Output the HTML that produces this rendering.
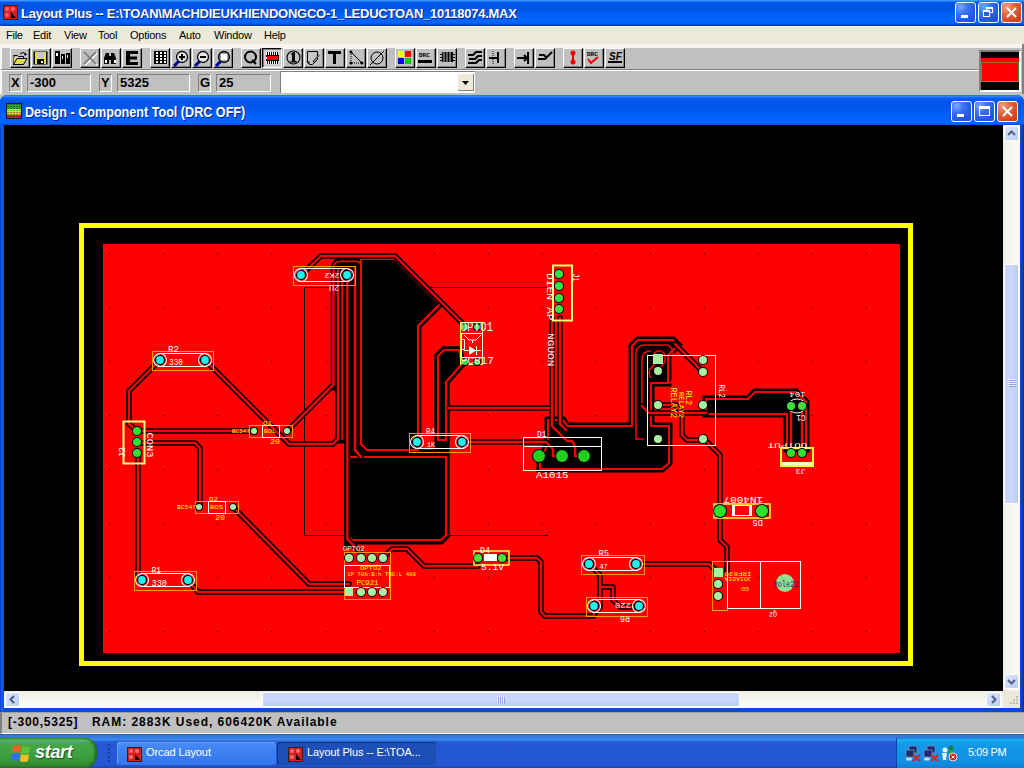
<!DOCTYPE html>
<html><head><meta charset="utf-8">
<style>
*{box-sizing:border-box}
body{margin:0;width:1024px;height:768px;overflow:hidden;position:relative;background:#c0c0c0;font-family:"Liberation Sans",sans-serif}
.a{position:absolute}
#title{left:0;top:0;width:1024px;height:26px;background:linear-gradient(to bottom,#3d95ff 0px,#3d95ff 1px,#0058ee 2px,#0053e0 6px,#0055e8 10px,#0062fa 16px,#0066ff 23px,#0050e0 24px,#0040b8 25px,#0040b8 26px)}
#title .t{left:21px;top:6px;color:#fff;font-weight:bold;font-size:13px;letter-spacing:-0.25px;white-space:nowrap;text-shadow:1px 1px 0 #0a1e84}
.xpbtn{width:21px;height:21px;border:1px solid #fff;border-radius:3px;background:radial-gradient(circle at 25% 20%,#7aa6ff 0%,#3a6ff5 35%,#2358e6 70%,#1c4fd8 100%)}
.xpclose{background:radial-gradient(circle at 25% 20%,#f4a080 0%,#e2623a 40%,#d4461e 75%,#c43a14 100%)}
#menu{left:0;top:26px;width:1024px;height:18px;background:#ece9d8;border-top:1px solid #f4f6fb}
#menu span{position:absolute;top:2px;font-size:11px;color:#000;letter-spacing:-0.25px}
#tbband{left:0;top:44px;width:1024px;height:50px;background:#c0c0c0;border-top:4px solid #f6f6f3}
.btn{position:absolute;top:48px;width:20px;height:20px;background:#c0c0c0;border-top:1px solid #fff;border-left:1px solid #fff;border-right:1px solid #000;border-bottom:1px solid #000;box-shadow:inset -1px -1px 0 #808080}
.btn.pr{border-top:1px solid #000;border-left:1px solid #000;border-right:1px solid #fff;border-bottom:1px solid #fff;box-shadow:inset 1px 1px 0 #808080;background:#cfcfcf}
.sunk{position:absolute;top:74px;height:18px;background:#c0c0c0;border-top:1px solid #808080;border-left:1px solid #808080;border-right:1px solid #fff;border-bottom:1px solid #fff;font-weight:bold;font-size:13px;padding-left:2px;line-height:16px;color:#000}
#mdi{left:0;top:95px;width:1024px;height:617px;background:#0048e0;border-radius:7px 7px 0 0;background:linear-gradient(to right,#0a3fd0 0px,#1a5cf0 2px,#0a48e0 4px,#0a48e0 1020px,#0840c8 1022px,#062c9a 1024px)}
#mtitle{left:0;top:95px;width:1024px;height:30px;border-radius:7px 7px 0 0;background:linear-gradient(to bottom,#0a60ff 0px,#3c8cff 1px,#0a5ef8 3px,#0053e6 8px,#0058ee 14px,#0064fc 22px,#0066ff 28px,#0050e0 30px)}
#mtitle .t{left:25px;top:9px;color:#fff;font-weight:bold;font-size:14px;letter-spacing:0px;transform:scaleX(0.9);transform-origin:0 0;white-space:nowrap;text-shadow:1px 1px 0 #0a1e84}
#canvas{left:4px;top:125px;width:999px;height:566px;background:#000}
#vscroll{left:1003px;top:125px;width:17px;height:566px;background:linear-gradient(to right,#eeede5,#fdfdf9)}
#hscroll{left:4px;top:691px;width:999px;height:17px;background:linear-gradient(to bottom,#eeede5,#fdfdf9)}
.sbb{position:absolute;width:15px;height:15px;border:1px solid #fff;border-radius:2px;background:linear-gradient(135deg,#dce6fd,#b9ccf8)}
#status{left:0;top:712px;width:1024px;height:22px;background:#c0c0c0;border-top:1px solid #a0a0a0;border-left:2px solid #808080;border-bottom:1px solid #fff}
#status span{position:absolute;top:2px;font-size:12px;font-weight:bold;color:#000;white-space:nowrap;letter-spacing:0.75px}
#task{left:0;top:734px;width:1024px;height:34px;background:linear-gradient(to bottom,#2a5cb8 0px,#2a5cb8 1px,#3478dc 1px,#3478dc 3px,#3a80e8 4px,#3d8cf0 6px,#2c64d8 7px,#2456d2 10px,#2458d6 30px,#1f4fc0 33px,#1941a5 34px)}
</style></head><body>
<div id="title" class="a">
  <svg class="a" style="left:3px;top:5px" width="15" height="15" viewBox="0 0 15 15"><rect x="0.5" y="0.5" width="14" height="14" fill="#d82020" stroke="#302020"/><circle cx="4" cy="4" r="2" fill="#ff6060"/><circle cx="10" cy="4" r="2" fill="#ff6060"/><circle cx="4" cy="10" r="2" fill="#ff6060"/><path d="M8 7 L13 13 L8 13 Z" fill="#000"/></svg>
  <div class="t a">Layout Plus -- E:\TOAN\MACHDIEUKHIENDONGCO-1_LEDUCTOAN_10118074.MAX</div>
  <div class="a xpbtn" style="left:955px;top:2px"><div class="a" style="left:5px;top:12px;width:7px;height:3px;background:#fff"></div></div>
  <div class="a xpbtn" style="left:978px;top:2px"><div class="a" style="left:7px;top:4px;width:7px;height:6px;border:1px solid #fff;border-top-width:2px"></div><div class="a" style="left:4px;top:7px;width:7px;height:7px;border:1px solid #fff;border-top-width:2px;background:#2a60ec"></div></div>
  <div class="a xpbtn xpclose" style="left:1001px;top:2px"><svg class="a" style="left:0;top:0" width="19" height="19"><path d="M5 5 L14 14 M14 5 L5 14" stroke="#fff" stroke-width="2"/></svg></div>
</div>
<div id="menu" class="a">
  <span style="left:6px">File</span><span style="left:33px">Edit</span><span style="left:64px">View</span><span style="left:98px">Tool</span><span style="left:130px">Options</span><span style="left:179px">Auto</span><span style="left:214px">Window</span><span style="left:264px">Help</span>
</div>
<div id="tbband" class="a"></div>
<div class="a" style="left:0;top:44px;width:2px;height:50px;background:#f6f6f3"></div>
<div class="a" style="left:1px;top:69px;width:978px;height:1px;background:#808080"></div>
<div class="a" style="left:1px;top:70px;width:978px;height:1px;background:#fff"></div>
<div class="btn" style="left:10px"></div>
<div class="btn" style="left:31px"></div>
<div class="btn" style="left:52px"></div>
<div class="btn" style="left:80px"></div>
<div class="btn" style="left:101px"></div>
<div class="btn" style="left:122px"></div>
<div class="btn" style="left:150px"></div>
<div class="btn" style="left:171px"></div>
<div class="btn" style="left:192px"></div>
<div class="btn" style="left:213px"></div>
<div class="btn" style="left:241px"></div>
<div class="btn pr" style="left:262px"></div>
<div class="btn" style="left:283px"></div>
<div class="btn" style="left:304px"></div>
<div class="btn" style="left:325px"></div>
<div class="btn" style="left:346px"></div>
<div class="btn" style="left:367px"></div>
<div class="btn" style="left:395px"></div>
<div class="btn" style="left:416px"></div>
<div class="btn" style="left:437px"></div>
<div class="btn" style="left:465px"></div>
<div class="btn" style="left:486px"></div>
<div class="btn" style="left:514px"></div>
<div class="btn" style="left:535px"></div>
<div class="btn" style="left:563px"></div>
<div class="btn" style="left:584px"></div>
<div class="btn" style="left:605px"></div>
<svg class="a" style="left:0;top:44px" width="640" height="26" viewBox="0 44 640 26">
<path d="M13.5,55.5 h4 l1,1 h5 v2" fill="none" stroke="#000"/>
<path d="M13.5,64.5 v-8.5 h1 v8.5 z" fill="#000"/>
<path d="M14,57 h9 v2 h-6 l-3,5 z" fill="#e0e040"/>
<path d="M13.5,64.5 l3.5,-6 h10 l-3.5,6 z" fill="#e0e040" stroke="#000"/>
<path d="M20,54 q3,-3 6,0" fill="none" stroke="#000"/><path d="M25,52.5 l2,2.5 l-3,0.5z" fill="#000"/>
<rect x="33.5" y="51.5" width="14" height="13" fill="#000"/>
<rect x="35" y="52" width="11" height="12" fill="#e0e040"/>
<rect x="37" y="52" width="7" height="6" fill="#c8c8c8"/>
<rect x="37" y="59" width="7" height="5" fill="#000"/><rect x="41" y="61" width="2" height="2" fill="#fff"/>
<rect x="55" y="51" width="5" height="13" fill="#000"/><rect x="56" y="53" width="2" height="3" fill="#fff"/>
<rect x="61" y="54" width="4" height="10" fill="#000"/><rect x="62" y="56" width="1" height="3" fill="#fff"/>
<rect x="66" y="53" width="4" height="11" fill="#000"/><rect x="67" y="55" width="1" height="3" fill="#fff"/>
<path d="M84,52 L96,64 M96,52 L84,64" stroke="#fff" stroke-width="2" transform="translate(1,1)"/><path d="M84,52 L96,64 M96,52 L84,64" stroke="#808080" stroke-width="2"/>
<path d="M104,64 v-6 l2,-5 h3 v3 h2 v-3 h3 l2,5 v6 h-5 v-4 h-2 v4 z" fill="#000"/><rect x="105" y="60" width="2" height="3" fill="#fff"/><rect x="114" y="60" width="2" height="3" fill="#fff"/>
<path d="M126,51 h12 v3 h-8 v2.5 h7 v3 h-7 v2.5 h8 v3 h-12 z" fill="#000"/>
<rect x="154" y="51" width="13" height="13" fill="#000"/>
<rect x="156" y="52" width="2" height="2" fill="#fff"/>
<rect x="156" y="55" width="2" height="2" fill="#fff"/>
<rect x="156" y="58" width="2" height="2" fill="#fff"/>
<rect x="156" y="61" width="2" height="2" fill="#fff"/>
<rect x="160" y="52" width="2" height="2" fill="#fff"/>
<rect x="160" y="55" width="2" height="2" fill="#fff"/>
<rect x="160" y="58" width="2" height="2" fill="#fff"/>
<rect x="160" y="61" width="2" height="2" fill="#fff"/>
<rect x="164" y="52" width="2" height="2" fill="#fff"/>
<rect x="164" y="55" width="2" height="2" fill="#fff"/>
<rect x="164" y="58" width="2" height="2" fill="#fff"/>
<rect x="164" y="61" width="2" height="2" fill="#fff"/>
<path d="M179,61 l-5,5" stroke="#0000a0" stroke-width="3"/>
<circle cx="182" cy="57" r="5.5" fill="#e4e4e4" stroke="#000" stroke-width="1.3"/>
<path d="M179,57 h6 M182,54 v6" stroke="#000" stroke-width="2"/>
<path d="M200,61 l-5,5" stroke="#0000a0" stroke-width="3"/>
<circle cx="203" cy="57" r="5.5" fill="#e4e4e4" stroke="#000" stroke-width="1.3"/>
<path d="M200,57 h6" stroke="#000" stroke-width="2"/>
<path d="M221,61 l-5,5" stroke="#0000a0" stroke-width="3"/>
<circle cx="224" cy="57" r="5.5" fill="#e4e4e4" stroke="#000" stroke-width="1.3"/>
<rect x="220" y="53" width="8" height="8" fill="#fff" stroke="#000" stroke-width="0.8"/>
<circle cx="250.5" cy="57" r="5.5" fill="none" stroke="#000" stroke-width="2"/><path d="M252,60 l4,4" stroke="#000" stroke-width="2"/>
<rect x="267" y="52" width="1" height="3" fill="#000"/><rect x="267" y="61" width="1" height="3" fill="#000"/>
<rect x="266" y="52" width="1" height="3" fill="#fff"/><rect x="266" y="61" width="1" height="3" fill="#fff"/>
<rect x="269" y="52" width="1" height="3" fill="#000"/><rect x="269" y="61" width="1" height="3" fill="#000"/>
<rect x="268" y="52" width="1" height="3" fill="#fff"/><rect x="268" y="61" width="1" height="3" fill="#fff"/>
<rect x="271" y="52" width="1" height="3" fill="#000"/><rect x="271" y="61" width="1" height="3" fill="#000"/>
<rect x="270" y="52" width="1" height="3" fill="#fff"/><rect x="270" y="61" width="1" height="3" fill="#fff"/>
<rect x="273" y="52" width="1" height="3" fill="#000"/><rect x="273" y="61" width="1" height="3" fill="#000"/>
<rect x="272" y="52" width="1" height="3" fill="#fff"/><rect x="272" y="61" width="1" height="3" fill="#fff"/>
<rect x="275" y="52" width="1" height="3" fill="#000"/><rect x="275" y="61" width="1" height="3" fill="#000"/>
<rect x="274" y="52" width="1" height="3" fill="#fff"/><rect x="274" y="61" width="1" height="3" fill="#fff"/>
<rect x="277" y="52" width="1" height="3" fill="#000"/><rect x="277" y="61" width="1" height="3" fill="#000"/>
<rect x="276" y="52" width="1" height="3" fill="#fff"/><rect x="276" y="61" width="1" height="3" fill="#fff"/>
<rect x="266" y="55" width="13" height="6" fill="#000"/><rect x="267" y="56" width="11" height="4" fill="#f00"/><rect x="266" y="57" width="1" height="2" fill="#fff"/>
<circle cx="293.5" cy="57.5" r="6.5" fill="none" stroke="#000" stroke-width="1.2"/><path d="M291,53.5 l2.5,-1.5 h1.5 v9 h1.5 v1.5 h-6 v-1.5 h1.5 v-6.5 h-1 z" fill="#000"/>
<path d="M307.5,51.5 h10 v8 l-5,5 h-3 l-2,-2 z" fill="#c8c8c8" stroke="#000"/><path d="M307.5,62.5 q2,-2 2,1" fill="none" stroke="#000"/><path d="M313,62 l6,-7" stroke="#000" stroke-width="1.5"/><path d="M314,61 l5,-6" stroke="#fff" stroke-width="0.6"/>
<path d="M328,51 h13 v3 h-5 v10 h-3 v-10 h-5 z" fill="#000"/>
<path d="M351,52 v11 h11" fill="none" stroke="#000" stroke-dasharray="1 1"/><path d="M351,52 l11,11" stroke="#000"/><circle cx="351" cy="52" r="1.5"/><circle cx="351" cy="63" r="1.5"/><circle cx="362" cy="63" r="1.5"/>
<circle cx="377" cy="58" r="6" fill="none" stroke="#000"/><path d="M370,65 L384,51" stroke="#000"/>
<rect x="398" y="51" width="6" height="6" fill="#ff0"/><rect x="405" y="51" width="6" height="6" fill="#f00"/><rect x="398" y="58" width="6" height="6" fill="#00f"/><rect x="405" y="58" width="6" height="6" fill="#0c0"/>
<text x="419" y="57" font-size="6" font-weight="bold" font-family="Liberation Mono">DRC</text><rect x="418" y="60" width="14" height="3" fill="#000"/>
<rect x="442" y="52" width="11" height="10" fill="#000"/><path d="M440,54.5 h15 M440,57.5 h15 M440,60.5 h15" stroke="#000"/><path d="M444,52v10 M447,52v10 M450,52v10" stroke="#c0c0c0"/>
<path d="M468,55 h5 l3,-3 h6 M469,59 h6 l3,-3 h4 M468,63 h8 l3,-3 h3" fill="none" stroke="#000" stroke-width="2"/>
<path d="M493,51 v14" stroke="#000" stroke-dasharray="1 1"/><path d="M489,58 h9 M498,52 v11" stroke="#000" stroke-width="2"/>
<path d="M517,58 h10 M524,55 l3,3 l-3,3 M528,52 v12" fill="none" stroke="#000" stroke-width="2"/>
<path d="M538,59 h7 l7,-7 M539,55 h5 l2,2" fill="none" stroke="#000" stroke-width="2"/>
<circle cx="573" cy="53" r="2.5" fill="#e00"/><circle cx="573" cy="62" r="2.5" fill="#e00"/><rect x="572" y="53" width="2" height="9" fill="#e00"/>
<text x="587" y="56" font-size="6" font-weight="bold" font-family="Liberation Mono">DRC</text><path d="M588,59 l3,4 l7,-6" fill="none" stroke="#e00" stroke-width="2"/>
<text x="609" y="60" font-size="10" font-weight="bold" font-style="italic" font-family="Liberation Sans">SF</text><rect x="608" y="61" width="14" height="2" fill="#000"/>
</svg>
<div class="sunk" style="left:9px;width:13px;padding-left:1px">X</div>
<div class="sunk" style="left:27px;width:64px">-300</div>
<div class="sunk" style="left:99px;width:13px;padding-left:1px">Y</div>
<div class="sunk" style="left:117px;width:73px">5325</div>
<div class="sunk" style="left:198px;width:13px;padding-left:1px">G</div>
<div class="sunk" style="left:216px;width:55px">25</div>
<div class="a" style="left:280px;top:71px;width:195px;height:22px;background:#fff;border-top:1px solid #808080;border-left:1px solid #808080"></div>
<div class="a" style="left:458px;top:74px;width:16px;height:17px;background:#ece9d8;border-right:1px solid #808080;border-bottom:1px solid #808080"><svg class="a" style="left:0;top:0" width="16" height="17"><path d="M4 7 h7 l-3.5 4 z" fill="#000"/></svg></div>
<div class="a" style="left:979px;top:50px;width:42px;height:42px;border-top:2px solid #808080;border-left:2px solid #808080;border-right:2px solid #fff;border-bottom:2px solid #fff;background:#000">
  <div class="a" style="left:0;top:6px;width:38px;height:4px;background:#f00"></div>
  <div class="a" style="left:0;top:10px;width:38px;height:20px;background:#f00;border:1px solid #3a9a20;border-top-color:#b07000;border-bottom-color:#a08000"></div>
</div>
<div class="a" style="left:1022px;top:44px;width:2px;height:50px;background:#808080"></div>
<div id="mdi" class="a"></div>
<div id="mtitle" class="a">
  <svg class="a" style="left:6px;top:8px" width="16" height="16" viewBox="0 0 16 16"><rect x="0" y="0" width="16" height="16" fill="#102010"/><rect x="1" y="1" width="14" height="14" fill="#30a030"/><rect x="1" y="6" width="14" height="3" fill="#a0ff40"/><rect x="1" y="9" width="14" height="3" fill="#e0c040"/><rect x="1" y="12" width="14" height="3" fill="#c02060"/><path d="M2 1v14M5 1v14M8 1v14M11 1v14M14 1v14" stroke="#000" stroke-width="1" stroke-dasharray="1 1" opacity="0.6"/></svg>
  <div class="t a">Design - Component Tool (DRC OFF)</div>
  <div class="a xpbtn" style="left:951px;top:6px"><div class="a" style="left:5px;top:12px;width:7px;height:3px;background:#fff"></div></div>
  <div class="a xpbtn" style="left:974px;top:6px"><div class="a" style="left:4px;top:4px;width:11px;height:10px;border:1px solid #fff;border-top-width:3px"></div></div>
  <div class="a xpbtn xpclose" style="left:997px;top:6px"><svg class="a" style="left:0;top:0" width="19" height="19"><path d="M5 5 L14 14 M14 5 L5 14" stroke="#fff" stroke-width="2"/></svg></div>
</div>
<div id="canvas" class="a"><svg class="a" style="left:0;top:0" width="999" height="566" viewBox="4 125 999 566" shape-rendering="crispEdges">
<rect x="4" y="125" width="999" height="566" fill="#000"/>
<rect x="81.5" y="225.5" width="829" height="438" fill="none" stroke="#ffff00" stroke-width="5"/>
<rect x="103" y="244" width="797" height="409" fill="#ff0000"/>
<rect x="109" y="253" width="1" height="1" fill="#000"/>
<rect x="109" y="307" width="1" height="1" fill="#000"/>
<rect x="109" y="361" width="1" height="1" fill="#000"/>
<rect x="109" y="415" width="1" height="1" fill="#000"/>
<rect x="109" y="469" width="1" height="1" fill="#000"/>
<rect x="109" y="523" width="1" height="1" fill="#000"/>
<rect x="109" y="577" width="1" height="1" fill="#000"/>
<rect x="109" y="631" width="1" height="1" fill="#000"/>
<rect x="163" y="253" width="1" height="1" fill="#000"/>
<rect x="163" y="307" width="1" height="1" fill="#000"/>
<rect x="163" y="361" width="1" height="1" fill="#000"/>
<rect x="163" y="415" width="1" height="1" fill="#000"/>
<rect x="163" y="469" width="1" height="1" fill="#000"/>
<rect x="163" y="523" width="1" height="1" fill="#000"/>
<rect x="163" y="577" width="1" height="1" fill="#000"/>
<rect x="163" y="631" width="1" height="1" fill="#000"/>
<rect x="217" y="253" width="1" height="1" fill="#000"/>
<rect x="217" y="307" width="1" height="1" fill="#000"/>
<rect x="217" y="361" width="1" height="1" fill="#000"/>
<rect x="217" y="415" width="1" height="1" fill="#000"/>
<rect x="217" y="469" width="1" height="1" fill="#000"/>
<rect x="217" y="523" width="1" height="1" fill="#000"/>
<rect x="217" y="577" width="1" height="1" fill="#000"/>
<rect x="217" y="631" width="1" height="1" fill="#000"/>
<rect x="271" y="253" width="1" height="1" fill="#000"/>
<rect x="271" y="307" width="1" height="1" fill="#000"/>
<rect x="271" y="361" width="1" height="1" fill="#000"/>
<rect x="271" y="415" width="1" height="1" fill="#000"/>
<rect x="271" y="469" width="1" height="1" fill="#000"/>
<rect x="271" y="523" width="1" height="1" fill="#000"/>
<rect x="271" y="577" width="1" height="1" fill="#000"/>
<rect x="271" y="631" width="1" height="1" fill="#000"/>
<rect x="326" y="253" width="1" height="1" fill="#000"/>
<rect x="326" y="307" width="1" height="1" fill="#000"/>
<rect x="326" y="361" width="1" height="1" fill="#000"/>
<rect x="326" y="415" width="1" height="1" fill="#000"/>
<rect x="326" y="469" width="1" height="1" fill="#000"/>
<rect x="326" y="523" width="1" height="1" fill="#000"/>
<rect x="326" y="577" width="1" height="1" fill="#000"/>
<rect x="326" y="631" width="1" height="1" fill="#000"/>
<rect x="380" y="253" width="1" height="1" fill="#000"/>
<rect x="380" y="307" width="1" height="1" fill="#000"/>
<rect x="380" y="361" width="1" height="1" fill="#000"/>
<rect x="380" y="415" width="1" height="1" fill="#000"/>
<rect x="380" y="469" width="1" height="1" fill="#000"/>
<rect x="380" y="523" width="1" height="1" fill="#000"/>
<rect x="380" y="577" width="1" height="1" fill="#000"/>
<rect x="380" y="631" width="1" height="1" fill="#000"/>
<rect x="434" y="253" width="1" height="1" fill="#000"/>
<rect x="434" y="307" width="1" height="1" fill="#000"/>
<rect x="434" y="361" width="1" height="1" fill="#000"/>
<rect x="434" y="415" width="1" height="1" fill="#000"/>
<rect x="434" y="469" width="1" height="1" fill="#000"/>
<rect x="434" y="523" width="1" height="1" fill="#000"/>
<rect x="434" y="577" width="1" height="1" fill="#000"/>
<rect x="434" y="631" width="1" height="1" fill="#000"/>
<rect x="488" y="253" width="1" height="1" fill="#000"/>
<rect x="488" y="307" width="1" height="1" fill="#000"/>
<rect x="488" y="361" width="1" height="1" fill="#000"/>
<rect x="488" y="415" width="1" height="1" fill="#000"/>
<rect x="488" y="469" width="1" height="1" fill="#000"/>
<rect x="488" y="523" width="1" height="1" fill="#000"/>
<rect x="488" y="577" width="1" height="1" fill="#000"/>
<rect x="488" y="631" width="1" height="1" fill="#000"/>
<rect x="542" y="253" width="1" height="1" fill="#000"/>
<rect x="542" y="307" width="1" height="1" fill="#000"/>
<rect x="542" y="361" width="1" height="1" fill="#000"/>
<rect x="542" y="415" width="1" height="1" fill="#000"/>
<rect x="542" y="469" width="1" height="1" fill="#000"/>
<rect x="542" y="523" width="1" height="1" fill="#000"/>
<rect x="542" y="577" width="1" height="1" fill="#000"/>
<rect x="542" y="631" width="1" height="1" fill="#000"/>
<rect x="596" y="253" width="1" height="1" fill="#000"/>
<rect x="596" y="307" width="1" height="1" fill="#000"/>
<rect x="596" y="361" width="1" height="1" fill="#000"/>
<rect x="596" y="415" width="1" height="1" fill="#000"/>
<rect x="596" y="469" width="1" height="1" fill="#000"/>
<rect x="596" y="523" width="1" height="1" fill="#000"/>
<rect x="596" y="577" width="1" height="1" fill="#000"/>
<rect x="596" y="631" width="1" height="1" fill="#000"/>
<rect x="650" y="253" width="1" height="1" fill="#000"/>
<rect x="650" y="307" width="1" height="1" fill="#000"/>
<rect x="650" y="361" width="1" height="1" fill="#000"/>
<rect x="650" y="415" width="1" height="1" fill="#000"/>
<rect x="650" y="469" width="1" height="1" fill="#000"/>
<rect x="650" y="523" width="1" height="1" fill="#000"/>
<rect x="650" y="577" width="1" height="1" fill="#000"/>
<rect x="650" y="631" width="1" height="1" fill="#000"/>
<rect x="704" y="253" width="1" height="1" fill="#000"/>
<rect x="704" y="307" width="1" height="1" fill="#000"/>
<rect x="704" y="361" width="1" height="1" fill="#000"/>
<rect x="704" y="415" width="1" height="1" fill="#000"/>
<rect x="704" y="469" width="1" height="1" fill="#000"/>
<rect x="704" y="523" width="1" height="1" fill="#000"/>
<rect x="704" y="577" width="1" height="1" fill="#000"/>
<rect x="704" y="631" width="1" height="1" fill="#000"/>
<rect x="758" y="253" width="1" height="1" fill="#000"/>
<rect x="758" y="307" width="1" height="1" fill="#000"/>
<rect x="758" y="361" width="1" height="1" fill="#000"/>
<rect x="758" y="415" width="1" height="1" fill="#000"/>
<rect x="758" y="469" width="1" height="1" fill="#000"/>
<rect x="758" y="523" width="1" height="1" fill="#000"/>
<rect x="758" y="577" width="1" height="1" fill="#000"/>
<rect x="758" y="631" width="1" height="1" fill="#000"/>
<rect x="812" y="253" width="1" height="1" fill="#000"/>
<rect x="812" y="307" width="1" height="1" fill="#000"/>
<rect x="812" y="361" width="1" height="1" fill="#000"/>
<rect x="812" y="415" width="1" height="1" fill="#000"/>
<rect x="812" y="469" width="1" height="1" fill="#000"/>
<rect x="812" y="523" width="1" height="1" fill="#000"/>
<rect x="812" y="577" width="1" height="1" fill="#000"/>
<rect x="812" y="631" width="1" height="1" fill="#000"/>
<rect x="866" y="253" width="1" height="1" fill="#000"/>
<rect x="866" y="307" width="1" height="1" fill="#000"/>
<rect x="866" y="361" width="1" height="1" fill="#000"/>
<rect x="866" y="415" width="1" height="1" fill="#000"/>
<rect x="866" y="469" width="1" height="1" fill="#000"/>
<rect x="866" y="523" width="1" height="1" fill="#000"/>
<rect x="866" y="577" width="1" height="1" fill="#000"/>
<rect x="866" y="631" width="1" height="1" fill="#000"/>
</svg>
<svg class="a" style="left:0;top:0" width="999" height="566" viewBox="4 125 999 566">
<path d="M548,287.5 H304.5 V535.5 H548" fill="none" stroke="#000" stroke-width="1"/>
<path d="M334.5,265 L340,259 L356,259 L361,262 L361,446 L368,453 L438,453 L438,356 L444,350 L459,350 L462,364 L446,382 L446,536 L441,541 L353,541 L349,545 L347.5,545 L347.5,440 L339.5,440 L339.5,387 L334.5,387 Z" fill="#000" stroke="#000" stroke-width="7" stroke-linejoin="miter"/>
<path d="M361,259 L395,259 L440,304 L418,326 L418,450 L367,450 L361,444 Z" fill="#000" stroke="#000" stroke-width="7" stroke-linejoin="miter"/>
<path d="M361,259 L395,259 L440,304 L418,326 L418,450 L367,450 L361,444 Z" fill="none" stroke="#ff0000" stroke-width="2"/>
<path d="M342.3,268 V440" fill="none" stroke="#ff0000" stroke-width="1.8"/>
<path d="M333.3,292 V268 Q333.3,261.3 341,261.3 H356 Q361.3,261.3 361.3,267" fill="none" stroke="#ff0000" stroke-width="1.8"/>
<path d="M349,457 L446,457 L446,535 L441,540 L352,540 L349,537 Z" fill="#000" stroke="#000" stroke-width="7" stroke-linejoin="miter"/>
<path d="M349,457 L446,457 L446,535 L441,540 L352,540 L349,537 Z" fill="none" stroke="#ff0000" stroke-width="2"/>
<path d="M632,346 L638,340 L673,340 L678,345 L668,355 L668,383 L651,383 L651,426 L669,426 L669,463 L662,469 L540,469 L540,462 L546,448 L548,440 L548,420 L563,420 L567,426 L632,426 Z" fill="#000" stroke="#000" stroke-width="7" stroke-linejoin="miter"/>
<path d="M632,346 L638,340 L673,340 L678,345 L668,355 L668,383 L651,383 L651,426 L669,426 L669,463 L662,469 L540,469 L540,462 L546,448 L548,440 L548,420 L563,420 L567,426 L632,426 Z" fill="none" stroke="#ff0000" stroke-width="2"/>
<path d="M651,378 Q648,375 650,369 L654,365 V356 Q654,351 659,351 Q665,351 665,357 V362 L660,368" fill="none" stroke="#ff0000" stroke-width="1.5"/>
<path d="M644,439 H636 V354 Q636,345 645,345 H668 L673,350" fill="none" stroke="#ff0000" stroke-width="1.5"/>
<path d="M642,406 V360 Q642,351 651,351" fill="none" stroke="#ff0000" stroke-width="1.5"/>
<path d="M656,383 H668 Q673,383 673,377 V350" fill="none" stroke="#ff0000" stroke-width="1.5"/>
<path d="M706,399 L748,399 L755,392 L796,392 L806,402 L806,449 L787,449 L787,414 L706,414 Z" fill="#000" stroke="#000" stroke-width="7" stroke-linejoin="miter"/>
<path d="M706,399 L748,399 L755,392 L796,392 L806,402 L806,449 L787,449 L787,414 L706,414 Z" fill="none" stroke="#ff0000" stroke-width="2"/>
<path d="M438,356 L444,350 L459,350 L462,364 L446,382 L446,440 L438,440 Z" fill="#000" stroke="#000" stroke-width="7" stroke-linejoin="miter"/>
<path d="M438,356 L444,350 L459,350 L462,364 L446,382 L446,440 L438,440 Z" fill="none" stroke="#ff0000" stroke-width="2"/>
<path d="M160,360 L129,391 L129,424 L137,431" fill="none" stroke="#000" stroke-width="5.6" stroke-linejoin="round" stroke-linecap="round"/>
<path d="M137,431 L253,431" fill="none" stroke="#000" stroke-width="5.6" stroke-linejoin="round" stroke-linecap="round"/>
<path d="M137,443 L195,443 L200,448 L200,507" fill="none" stroke="#000" stroke-width="5.6" stroke-linejoin="round" stroke-linecap="round"/>
<path d="M138,453 L138,574 L142,580" fill="none" stroke="#000" stroke-width="5.6" stroke-linejoin="round" stroke-linecap="round"/>
<path d="M188,580 L198,592 L349,592" fill="none" stroke="#000" stroke-width="5.6" stroke-linejoin="round" stroke-linecap="round"/>
<path d="M233,507 L309,584 L349,584" fill="none" stroke="#000" stroke-width="5.6" stroke-linejoin="round" stroke-linecap="round"/>
<path d="M205,360 L283,438 L289,444 L333,444 L338,439 L338,270" fill="none" stroke="#000" stroke-width="5.6" stroke-linejoin="round" stroke-linecap="round"/>
<path d="M287,431 L333.5,384.5 L333.5,268" fill="none" stroke="#000" stroke-width="5.6" stroke-linejoin="round" stroke-linecap="round"/>
<path d="M301,275 L321,256 L395,256 L465,326" fill="none" stroke="#000" stroke-width="5.6" stroke-linejoin="round" stroke-linecap="round"/>
<path d="M347.3,280 L347.3,539 L361,553 L361,558" fill="none" stroke="#000" stroke-width="5.6" stroke-linejoin="round" stroke-linecap="round"/>
<path d="M355,268 L355,450 L361,457" fill="none" stroke="#000" stroke-width="5.6" stroke-linejoin="round" stroke-linecap="round"/>
<path d="M383,558 L392,549 L407,549 L424,566 L478,566" fill="none" stroke="#000" stroke-width="5.6" stroke-linejoin="round" stroke-linecap="round"/>
<path d="M502,558 L537,558 L541,562 L541,612 L545,616 L594,616 L594,606" fill="none" stroke="#000" stroke-width="5.6" stroke-linejoin="round" stroke-linecap="round"/>
<path d="M589,564 L600,575 L600,607 L596,612" fill="none" stroke="#000" stroke-width="5.6" stroke-linejoin="round" stroke-linecap="round"/>
<path d="M600,587 L613,587 L613,600 L620,607 L639,607" fill="none" stroke="#000" stroke-width="5.6" stroke-linejoin="round" stroke-linecap="round"/>
<path d="M636,564 L709,564 L718,572" fill="none" stroke="#000" stroke-width="5.6" stroke-linejoin="round" stroke-linecap="round"/>
<path d="M462,442 L546,442 L553,449 L553,456 L562,456" fill="none" stroke="#000" stroke-width="5.6" stroke-linejoin="round" stroke-linecap="round"/>
<path d="M449,408 L549,408" fill="none" stroke="#000" stroke-width="5.6" stroke-linejoin="round" stroke-linecap="round"/>
<path d="M552,318 L552,426 L567,441 L572,441 L575,446 L575,456 L584,456" fill="none" stroke="#000" stroke-width="5.6" stroke-linejoin="round" stroke-linecap="round"/>
<path d="M560,318 L560,424 L566,430" fill="none" stroke="#000" stroke-width="5.6" stroke-linejoin="round" stroke-linecap="round"/>
<path d="M704,439 L720,455 L720,540 L727,547 L727,572" fill="none" stroke="#000" stroke-width="5.6" stroke-linejoin="round" stroke-linecap="round"/>
<path d="M703,372 L675,344" fill="none" stroke="#000" stroke-width="5.6" stroke-linejoin="round" stroke-linecap="round"/>
<path d="M642,406 L649,413 L706,413" fill="none" stroke="#000" stroke-width="5.6" stroke-linejoin="round" stroke-linecap="round"/>
<path d="M658,405 L676,405 L682,413 L682,435 L687,440 L703,440" fill="none" stroke="#000" stroke-width="5.6" stroke-linejoin="round" stroke-linecap="round"/>
<path d="M791,405 L791,453" fill="none" stroke="#000" stroke-width="5.6" stroke-linejoin="round" stroke-linecap="round"/>
<path d="M802,405 L802,453" fill="none" stroke="#000" stroke-width="5.6" stroke-linejoin="round" stroke-linecap="round"/>
<path d="M160,360 L129,391 L129,424 L137,431" fill="none" stroke="#ff0000" stroke-width="2.4" stroke-linejoin="round" stroke-linecap="round"/>
<path d="M137,431 L253,431" fill="none" stroke="#ff0000" stroke-width="2.4" stroke-linejoin="round" stroke-linecap="round"/>
<path d="M137,443 L195,443 L200,448 L200,507" fill="none" stroke="#ff0000" stroke-width="2.4" stroke-linejoin="round" stroke-linecap="round"/>
<path d="M138,453 L138,574 L142,580" fill="none" stroke="#ff0000" stroke-width="2.4" stroke-linejoin="round" stroke-linecap="round"/>
<path d="M188,580 L198,592 L349,592" fill="none" stroke="#ff0000" stroke-width="2.4" stroke-linejoin="round" stroke-linecap="round"/>
<path d="M233,507 L309,584 L349,584" fill="none" stroke="#ff0000" stroke-width="2.4" stroke-linejoin="round" stroke-linecap="round"/>
<path d="M205,360 L283,438 L289,444 L333,444 L338,439 L338,270" fill="none" stroke="#ff0000" stroke-width="2.4" stroke-linejoin="round" stroke-linecap="round"/>
<path d="M287,431 L333.5,384.5 L333.5,268" fill="none" stroke="#ff0000" stroke-width="2.4" stroke-linejoin="round" stroke-linecap="round"/>
<path d="M301,275 L321,256 L395,256 L465,326" fill="none" stroke="#ff0000" stroke-width="2.4" stroke-linejoin="round" stroke-linecap="round"/>
<path d="M347.3,280 L347.3,539 L361,553 L361,558" fill="none" stroke="#ff0000" stroke-width="2.4" stroke-linejoin="round" stroke-linecap="round"/>
<path d="M355,268 L355,450 L361,457" fill="none" stroke="#ff0000" stroke-width="2.4" stroke-linejoin="round" stroke-linecap="round"/>
<path d="M383,558 L392,549 L407,549 L424,566 L478,566" fill="none" stroke="#ff0000" stroke-width="2.4" stroke-linejoin="round" stroke-linecap="round"/>
<path d="M502,558 L537,558 L541,562 L541,612 L545,616 L594,616 L594,606" fill="none" stroke="#ff0000" stroke-width="2.4" stroke-linejoin="round" stroke-linecap="round"/>
<path d="M589,564 L600,575 L600,607 L596,612" fill="none" stroke="#ff0000" stroke-width="2.4" stroke-linejoin="round" stroke-linecap="round"/>
<path d="M600,587 L613,587 L613,600 L620,607 L639,607" fill="none" stroke="#ff0000" stroke-width="2.4" stroke-linejoin="round" stroke-linecap="round"/>
<path d="M636,564 L709,564 L718,572" fill="none" stroke="#ff0000" stroke-width="2.4" stroke-linejoin="round" stroke-linecap="round"/>
<path d="M462,442 L546,442 L553,449 L553,456 L562,456" fill="none" stroke="#ff0000" stroke-width="2.4" stroke-linejoin="round" stroke-linecap="round"/>
<path d="M449,408 L549,408" fill="none" stroke="#ff0000" stroke-width="2.4" stroke-linejoin="round" stroke-linecap="round"/>
<path d="M552,318 L552,426 L567,441 L572,441 L575,446 L575,456 L584,456" fill="none" stroke="#ff0000" stroke-width="2.4" stroke-linejoin="round" stroke-linecap="round"/>
<path d="M560,318 L560,424 L566,430" fill="none" stroke="#ff0000" stroke-width="2.4" stroke-linejoin="round" stroke-linecap="round"/>
<path d="M704,439 L720,455 L720,540 L727,547 L727,572" fill="none" stroke="#ff0000" stroke-width="2.4" stroke-linejoin="round" stroke-linecap="round"/>
<path d="M703,372 L675,344" fill="none" stroke="#ff0000" stroke-width="2.4" stroke-linejoin="round" stroke-linecap="round"/>
<path d="M642,406 L649,413 L706,413" fill="none" stroke="#ff0000" stroke-width="2.4" stroke-linejoin="round" stroke-linecap="round"/>
<path d="M658,405 L676,405 L682,413 L682,435 L687,440 L703,440" fill="none" stroke="#ff0000" stroke-width="2.4" stroke-linejoin="round" stroke-linecap="round"/>
<path d="M791,405 L791,453" fill="none" stroke="#ff0000" stroke-width="2.4" stroke-linejoin="round" stroke-linecap="round"/>
<path d="M802,405 L802,453" fill="none" stroke="#ff0000" stroke-width="2.4" stroke-linejoin="round" stroke-linecap="round"/>
<rect x="152.5" y="351.5" width="61" height="19" fill="none" stroke="#ff9900" stroke-width="1"/>
<path d="M160,353.5 H205 A7,7 0 0 1 205,366.5 H160 A7,7 0 0 1 160,353.5" fill="none" stroke="#fff" stroke-width="1"/>
<circle cx="160" cy="360" r="5.1" fill="#000"/>
<circle cx="160" cy="360" r="6.5" fill="none" stroke="#fff" stroke-width="1.1"/>
<circle cx="160" cy="360" r="3.9" fill="#20f0f0"/>
<circle cx="205" cy="360" r="5.1" fill="#000"/>
<circle cx="205" cy="360" r="6.5" fill="none" stroke="#fff" stroke-width="1.1"/>
<circle cx="205" cy="360" r="3.9" fill="#20f0f0"/>
<rect x="293.5" y="266.5" width="62" height="19" fill="none" stroke="#ff9900" stroke-width="1"/>
<path d="M301,268.5 H347 A7,7 0 0 1 347,281.5 H301 A7,7 0 0 1 301,268.5" fill="none" stroke="#fff" stroke-width="1"/>
<circle cx="301" cy="275" r="5.1" fill="#000"/>
<circle cx="301" cy="275" r="6.5" fill="none" stroke="#fff" stroke-width="1.1"/>
<circle cx="301" cy="275" r="3.9" fill="#20f0f0"/>
<circle cx="347" cy="275" r="5.1" fill="#000"/>
<circle cx="347" cy="275" r="6.5" fill="none" stroke="#fff" stroke-width="1.1"/>
<circle cx="347" cy="275" r="3.9" fill="#20f0f0"/>
<rect x="409.5" y="433.5" width="61" height="19" fill="none" stroke="#ff9900" stroke-width="1"/>
<path d="M417,435.5 H462 A7,7 0 0 1 462,448.5 H417 A7,7 0 0 1 417,435.5" fill="none" stroke="#fff" stroke-width="1"/>
<circle cx="417" cy="442" r="5.1" fill="#000"/>
<circle cx="417" cy="442" r="6.5" fill="none" stroke="#fff" stroke-width="1.1"/>
<circle cx="417" cy="442" r="3.9" fill="#20f0f0"/>
<circle cx="462" cy="442" r="5.1" fill="#000"/>
<circle cx="462" cy="442" r="6.5" fill="none" stroke="#fff" stroke-width="1.1"/>
<circle cx="462" cy="442" r="3.9" fill="#20f0f0"/>
<rect x="134.5" y="571.5" width="62" height="19" fill="none" stroke="#ff9900" stroke-width="1"/>
<path d="M142,573.5 H188 A7,7 0 0 1 188,586.5 H142 A7,7 0 0 1 142,573.5" fill="none" stroke="#fff" stroke-width="1"/>
<circle cx="142" cy="580" r="5.1" fill="#000"/>
<circle cx="142" cy="580" r="6.5" fill="none" stroke="#fff" stroke-width="1.1"/>
<circle cx="142" cy="580" r="3.9" fill="#20f0f0"/>
<circle cx="188" cy="580" r="5.1" fill="#000"/>
<circle cx="188" cy="580" r="6.5" fill="none" stroke="#fff" stroke-width="1.1"/>
<circle cx="188" cy="580" r="3.9" fill="#20f0f0"/>
<rect x="581.5" y="555.5" width="63" height="19" fill="none" stroke="#ff9900" stroke-width="1"/>
<path d="M589,557.5 H636 A7,7 0 0 1 636,570.5 H589 A7,7 0 0 1 589,557.5" fill="none" stroke="#fff" stroke-width="1"/>
<circle cx="589" cy="564" r="5.1" fill="#000"/>
<circle cx="589" cy="564" r="6.5" fill="none" stroke="#fff" stroke-width="1.1"/>
<circle cx="589" cy="564" r="3.9" fill="#20f0f0"/>
<circle cx="636" cy="564" r="5.1" fill="#000"/>
<circle cx="636" cy="564" r="6.5" fill="none" stroke="#fff" stroke-width="1.1"/>
<circle cx="636" cy="564" r="3.9" fill="#20f0f0"/>
<rect x="586.5" y="597.5" width="61" height="19" fill="none" stroke="#ff9900" stroke-width="1"/>
<path d="M594,599.5 H639 A7,7 0 0 1 639,612.5 H594 A7,7 0 0 1 594,599.5" fill="none" stroke="#fff" stroke-width="1"/>
<circle cx="594" cy="606" r="5.1" fill="#000"/>
<circle cx="594" cy="606" r="6.5" fill="none" stroke="#fff" stroke-width="1.1"/>
<circle cx="594" cy="606" r="3.9" fill="#20f0f0"/>
<circle cx="639" cy="606" r="5.1" fill="#000"/>
<circle cx="639" cy="606" r="6.5" fill="none" stroke="#fff" stroke-width="1.1"/>
<circle cx="639" cy="606" r="3.9" fill="#20f0f0"/>
<rect x="123.5" y="421.5" width="21" height="42" fill="none" stroke="#ffff80" stroke-width="2"/>
<circle cx="137" cy="431" r="5" fill="#000"/>
<circle cx="137" cy="431" r="4" fill="#30e030"/>
<circle cx="137" cy="442" r="5" fill="#000"/>
<circle cx="137" cy="442" r="4" fill="#30e030"/>
<circle cx="137" cy="453" r="5" fill="#000"/>
<circle cx="137" cy="453" r="4" fill="#30e030"/>
<rect x="553" y="265.5" width="19" height="55" fill="none" stroke="#ffff80" stroke-width="2"/>
<circle cx="559" cy="274" r="5" fill="#000"/>
<circle cx="559" cy="274" r="4" fill="#40e040"/>
<circle cx="559" cy="286" r="5" fill="#000"/>
<circle cx="559" cy="286" r="4" fill="#40e040"/>
<circle cx="559" cy="298" r="5" fill="#000"/>
<circle cx="559" cy="298" r="4" fill="#40e040"/>
<circle cx="559" cy="309" r="5" fill="#000"/>
<circle cx="559" cy="309" r="4" fill="#40e040"/>
<rect x="781" y="448" width="32" height="18" fill="none" stroke="#ffff40" stroke-width="2"/>
<rect x="782" y="462" width="30" height="3" fill="#ffffc0"/>
<circle cx="791" cy="453" r="5" fill="#000"/>
<circle cx="791" cy="453" r="4" fill="#30e030"/>
<circle cx="802" cy="453" r="5" fill="#000"/>
<circle cx="802" cy="453" r="4" fill="#30e030"/>
<ellipse cx="797" cy="406" rx="9" ry="7" fill="none" stroke="#fff" stroke-width="1"/>
<circle cx="791" cy="406" r="5" fill="#000"/>
<circle cx="791" cy="406" r="4" fill="#40e040"/>
<circle cx="802" cy="406" r="5" fill="#000"/>
<circle cx="802" cy="406" r="4" fill="#40e040"/>
<rect x="249.5" y="425.5" width="43" height="12" fill="none" stroke="#ff9900" stroke-width="1"/>
<rect x="262.5" y="425.5" width="17" height="12" fill="none" stroke="#fff" stroke-width="1"/>
<circle cx="254" cy="431" r="4" fill="#000"/>
<circle cx="254" cy="431" r="3" fill="#a8f0a0"/>
<circle cx="287" cy="431" r="4" fill="#000"/>
<circle cx="287" cy="431" r="3" fill="#a8f0a0"/>
<rect x="195.5" y="501.5" width="43" height="12" fill="none" stroke="#ff9900" stroke-width="1"/>
<rect x="208.5" y="501.5" width="17" height="12" fill="none" stroke="#fff" stroke-width="1"/>
<circle cx="199" cy="507" r="4" fill="#000"/>
<circle cx="199" cy="507" r="3" fill="#a8f0a0"/>
<circle cx="233" cy="507" r="4" fill="#000"/>
<circle cx="233" cy="507" r="3" fill="#a8f0a0"/>
<rect x="460.5" y="322.5" width="22" height="42" fill="none" stroke="#ffff40" stroke-width="1"/>
<rect x="461.5" y="333.5" width="21" height="24" fill="none" stroke="#fff" stroke-width="1"/>
<circle cx="465" cy="327" r="4" fill="#000"/>
<circle cx="465" cy="327" r="3" fill="#40e040"/>
<circle cx="477" cy="327" r="4" fill="#000"/>
<circle cx="477" cy="327" r="3" fill="#40e040"/>
<circle cx="465" cy="362" r="4" fill="#000"/>
<circle cx="465" cy="362" r="3" fill="#40e040"/>
<circle cx="477" cy="362" r="4" fill="#000"/>
<circle cx="477" cy="362" r="3" fill="#40e040"/>
<path d="M464,335 L469,340 H476 L481,335 M472.5,340 V343 M464,350.5 H481 M476.5,346 V355 M462,339.5 H464.5 V349.5 H462" fill="none" stroke="#fff" stroke-width="1"/>
<path d="M469,346 L476,350.5 L469,355 Z" fill="#fff"/>
<rect x="344.5" y="552.5" width="46" height="47" fill="none" stroke="#ff9900" stroke-width="1"/>
<rect x="344.5" y="565.5" width="45" height="22" fill="none" stroke="#fff" stroke-width="1"/>
<circle cx="361" cy="558" r="5" fill="#000"/>
<circle cx="361" cy="558" r="4" fill="#a8f0a0"/>
<circle cx="361" cy="592" r="5" fill="#000"/>
<circle cx="361" cy="592" r="4" fill="#a8f0a0"/>
<circle cx="372" cy="558" r="5" fill="#000"/>
<circle cx="372" cy="558" r="4" fill="#a8f0a0"/>
<circle cx="372" cy="592" r="5" fill="#000"/>
<circle cx="372" cy="592" r="4" fill="#a8f0a0"/>
<circle cx="383" cy="558" r="5" fill="#000"/>
<circle cx="383" cy="558" r="4" fill="#a8f0a0"/>
<circle cx="383" cy="592" r="5" fill="#000"/>
<circle cx="383" cy="592" r="4" fill="#a8f0a0"/>
<circle cx="349" cy="558" r="5" fill="#000"/>
<circle cx="349" cy="558" r="4" fill="#a8f0a0"/>
<rect x="345" y="588" width="8" height="8" fill="#a8f0a0"/>
<rect x="523.5" y="437.5" width="78" height="33" fill="none" stroke="#fff" stroke-width="1"/>
<line x1="523" y1="446.5" x2="601" y2="446.5" stroke="#fff"/>
<circle cx="539" cy="456" r="7" fill="#000"/>
<circle cx="539" cy="456" r="6" fill="#20d020"/>
<circle cx="562" cy="456" r="7" fill="#000"/>
<circle cx="562" cy="456" r="6" fill="#20d020"/>
<circle cx="584" cy="456" r="7" fill="#000"/>
<circle cx="584" cy="456" r="6" fill="#20d020"/>
<rect x="647.5" y="355.5" width="68" height="90" fill="none" stroke="#ffffc0" stroke-width="1"/>
<rect x="653" y="354" width="10" height="10" fill="#a8f0a0"/>
<circle cx="658" cy="371" r="5" fill="#000"/>
<circle cx="658" cy="371" r="4" fill="#a8f0a0"/>
<circle cx="703" cy="360" r="5" fill="#000"/>
<circle cx="703" cy="360" r="4" fill="#a8f0a0"/>
<circle cx="703" cy="372" r="5" fill="#000"/>
<circle cx="703" cy="372" r="4" fill="#a8f0a0"/>
<circle cx="658" cy="405" r="5" fill="#000"/>
<circle cx="658" cy="405" r="4" fill="#a8f0a0"/>
<circle cx="703" cy="405" r="5" fill="#000"/>
<circle cx="703" cy="405" r="4" fill="#a8f0a0"/>
<circle cx="658" cy="439" r="5" fill="#000"/>
<circle cx="658" cy="439" r="4" fill="#a8f0a0"/>
<circle cx="703" cy="439" r="5" fill="#000"/>
<circle cx="703" cy="439" r="4" fill="#a8f0a0"/>
<rect x="474" y="551" width="35" height="14" fill="none" stroke="#ffff40" stroke-width="1.5"/>
<rect x="484" y="554" width="13" height="7" fill="#fff"/>
<circle cx="478" cy="558" r="5" fill="#000"/>
<circle cx="478" cy="558" r="4" fill="#50e030"/>
<circle cx="502" cy="558" r="5" fill="#000"/>
<circle cx="502" cy="558" r="4" fill="#50e030"/>
<rect x="714" y="504" width="56" height="14" fill="none" stroke="#ffff40" stroke-width="1.5"/>
<rect x="732" y="505" width="20" height="11" fill="#fff"/><rect x="735" y="506" width="14" height="9" fill="#ff0000"/>
<circle cx="720" cy="511" r="7" fill="#000"/>
<circle cx="720" cy="511" r="6" fill="#30e030"/>
<circle cx="762" cy="511" r="7" fill="#000"/>
<circle cx="762" cy="511" r="6" fill="#30e030"/>
<rect x="712.5" y="561.5" width="15" height="49" fill="none" stroke="#ff9900" stroke-width="1"/>
<rect x="727.5" y="561.5" width="73" height="47" fill="none" stroke="#fff" stroke-width="1"/>
<line x1="760.5" y1="561" x2="760.5" y2="608" stroke="#fff"/>
<rect x="714" y="568" width="9" height="9" fill="#a8f0a0"/>
<circle cx="718" cy="584" r="5" fill="#000"/>
<circle cx="718" cy="584" r="4" fill="#a8f0a0"/>
<circle cx="718" cy="596" r="5" fill="#000"/>
<circle cx="718" cy="596" r="4" fill="#a8f0a0"/>
<circle cx="785" cy="583" r="9" fill="#90e090"/>
<text x="168" y="352" fill="#fff" font-size="9.10" font-family="Liberation Mono" textLength="11" lengthAdjust="spacingAndGlyphs">R2</text>
<text x="169" y="365" fill="#fff" font-size="8.35" font-family="Liberation Mono" textLength="14" lengthAdjust="spacingAndGlyphs">330</text>
<text x="324.5" y="277.5" fill="#fff" font-size="7.59" font-family="Liberation Mono" textLength="15" lengthAdjust="spacingAndGlyphs" transform="rotate(180 332 275)">2K2</text>
<text x="329" y="290.5" fill="#fff" font-size="8.35" font-family="Liberation Mono" textLength="10.5" lengthAdjust="spacingAndGlyphs" transform="rotate(180 334.25 287.75)">2U</text>
<text x="426" y="434" fill="#fff" font-size="9.10" font-family="Liberation Mono" textLength="9" lengthAdjust="spacingAndGlyphs">R4</text>
<text x="427" y="447" fill="#fff" font-size="7.59" font-family="Liberation Mono" textLength="8" lengthAdjust="spacingAndGlyphs">1K</text>
<text x="151.5" y="573" fill="#fff" font-size="9.10" font-family="Liberation Mono" textLength="9.5" lengthAdjust="spacingAndGlyphs">R1</text>
<text x="151.5" y="586" fill="#fff" font-size="9.86" font-family="Liberation Mono" textLength="15.5" lengthAdjust="spacingAndGlyphs">330</text>
<text x="598.5" y="555.5" fill="#fff" font-size="8.35" font-family="Liberation Mono" textLength="10.5" lengthAdjust="spacingAndGlyphs">R5</text>
<text x="599.5" y="569" fill="#fff" font-size="7.59" font-family="Liberation Mono" textLength="8" lengthAdjust="spacingAndGlyphs">47</text>
<text x="615" y="608" fill="#fff" font-size="7.59" font-family="Liberation Mono" textLength="16" lengthAdjust="spacingAndGlyphs" transform="rotate(180 623 605.5)">220</text>
<text x="620" y="622" fill="#fff" font-size="9.10" font-family="Liberation Mono" textLength="10" lengthAdjust="spacingAndGlyphs" transform="rotate(180 625 619)">R6</text>
<text x="537" y="436.5" fill="#fff" font-size="9.86" font-family="Liberation Mono" textLength="9.5" lengthAdjust="spacingAndGlyphs">D1</text>
<text x="536" y="477.5" fill="#fff" font-size="8.35" font-family="Liberation Mono" textLength="32.5" lengthAdjust="spacingAndGlyphs">A1015</text>
<text x="480" y="553" fill="#fff" font-size="9.10" font-family="Liberation Mono" textLength="10" lengthAdjust="spacingAndGlyphs">D4</text>
<text x="481" y="570" fill="#fff" font-size="9.10" font-family="Liberation Mono" textLength="23" lengthAdjust="spacingAndGlyphs">5.1V</text>
<text x="343" y="551" fill="#fff" font-size="7.59" font-family="Liberation Mono" textLength="21.5" lengthAdjust="spacingAndGlyphs">OPTO2</text>
<text x="360" y="570" fill="#ffff00" font-size="6.07" font-family="Liberation Mono" textLength="21.5" lengthAdjust="spacingAndGlyphs">OPTO2</text>
<text x="356.5" y="585" fill="#ffff00" font-size="7.59" font-family="Liberation Mono" textLength="22" lengthAdjust="spacingAndGlyphs">PC921</text>
<text x="347" y="576" fill="#ffff00" font-size="4.55" font-family="Liberation Mono" textLength="69" lengthAdjust="spacingAndGlyphs">1P 70%:B:h TBG:L 480</text>
<text x="460.5" y="331" fill="#fff" font-size="12.14" font-family="Liberation Mono" textLength="32.5" lengthAdjust="spacingAndGlyphs">OPTO1</text>
<text x="460.5" y="364" fill="#fff" font-size="11.38" font-family="Liberation Mono" textLength="33.5" lengthAdjust="spacingAndGlyphs">PC817</text>
<text x="533.75" y="352.75" fill="#fff" font-size="9.10" font-family="Liberation Mono" textLength="33.5" lengthAdjust="spacingAndGlyphs" transform="rotate(90 550.5 349.75)">NGUON</text>
<text x="525.5" y="299.5" fill="#fff" font-size="8.35" font-family="Liberation Mono" textLength="47.5" lengthAdjust="spacingAndGlyphs" transform="rotate(90 549.25 296.75)">DIEN AP</text>
<text x="571.5" y="280.5" fill="#fff" font-size="9.10" font-family="Liberation Mono" textLength="8" lengthAdjust="spacingAndGlyphs" transform="rotate(90 575.5 277.5)">J1</text>
<text x="116.25" y="455.75" fill="#fff" font-size="9.86" font-family="Liberation Mono" textLength="11" lengthAdjust="spacingAndGlyphs" transform="rotate(-90 121.75 452.5)">J2</text>
<text x="137.25" y="447.75" fill="#fff" font-size="8.35" font-family="Liberation Mono" textLength="25" lengthAdjust="spacingAndGlyphs" transform="rotate(90 149.75 445)">CON3</text>
<text x="715.5" y="394.5" fill="#fff" font-size="9.86" font-family="Liberation Mono" textLength="13.5" lengthAdjust="spacingAndGlyphs" transform="rotate(90 722.25 391.25)">RL2</text>
<text x="659" y="406" fill="#ffff00" font-size="9.86" font-family="Liberation Mono" textLength="30.5" lengthAdjust="spacingAndGlyphs" transform="rotate(90 674.25 402.75)">RELAY2</text>
<text x="681.25" y="400.75" fill="#ffff00" font-size="9.10" font-family="Liberation Mono" textLength="14.5" lengthAdjust="spacingAndGlyphs" transform="rotate(90 688.5 397.75)">RL2</text>
<text x="668.5" y="407.5" fill="#ffff00" font-size="7.59" font-family="Liberation Mono" textLength="26" lengthAdjust="spacingAndGlyphs" transform="rotate(90 681.5 405)">RELAY2</text>
<text x="789.5" y="396.5" fill="#fff" font-size="7.59" font-family="Liberation Mono" textLength="16" lengthAdjust="spacingAndGlyphs" transform="rotate(180 797.5 394)">104</text>
<text x="796.5" y="420" fill="#fff" font-size="8.35" font-family="Liberation Mono" textLength="9" lengthAdjust="spacingAndGlyphs" transform="rotate(180 801 417.25)">C1</text>
<text x="767.5" y="447.5" fill="#fff" font-size="7.59" font-family="Liberation Mono" textLength="40" lengthAdjust="spacingAndGlyphs" transform="rotate(180 787.5 445)">OUTPUT</text>
<text x="795.5" y="473" fill="#fff" font-size="6.83" font-family="Liberation Mono" textLength="10" lengthAdjust="spacingAndGlyphs" transform="rotate(180 800.5 470.75)">J3</text>
<text x="723.5" y="503" fill="#fff" font-size="9.10" font-family="Liberation Mono" textLength="39.5" lengthAdjust="spacingAndGlyphs" transform="rotate(180 743.25 500)">1N4007</text>
<text x="752.5" y="525" fill="#fff" font-size="8.35" font-family="Liberation Mono" textLength="10.5" lengthAdjust="spacingAndGlyphs" transform="rotate(180 757.75 522.25)">D5</text>
<text x="769" y="616" fill="#fff" font-size="6.83" font-family="Liberation Mono" textLength="8" lengthAdjust="spacingAndGlyphs" transform="rotate(180 773 613.75)">Q2</text>
<text x="773.5" y="586.5" fill="#302080" font-size="8.35" font-family="Liberation Mono" textLength="25" lengthAdjust="spacingAndGlyphs">Hole22</text>
<text x="741" y="590.5" fill="#ffff00" font-size="6.07" font-family="Liberation Mono" textLength="8" lengthAdjust="spacingAndGlyphs" transform="rotate(180 745 588.5)">GD</text>
<text x="724.5" y="575.5" fill="#ffff00" font-size="5.31" font-family="Liberation Mono" textLength="27" lengthAdjust="spacingAndGlyphs" transform="rotate(180 738 573.75)">IRF630</text>
<text x="724.5" y="580" fill="#ffff00" font-size="5.31" font-family="Liberation Mono" textLength="27" lengthAdjust="spacingAndGlyphs" transform="rotate(180 738 578.25)">JOIAOIA</text>
<text x="263" y="425" fill="#ffff00" font-size="6.07" font-family="Liberation Mono" textLength="9" lengthAdjust="spacingAndGlyphs">Q1</text>
<text x="232" y="432.5" fill="#ffff00" font-size="4.55" font-family="Liberation Mono" textLength="18" lengthAdjust="spacingAndGlyphs">BC547</text>
<text x="264" y="433" fill="#ffff00" font-size="5.31" font-family="Liberation Mono" textLength="12" lengthAdjust="spacingAndGlyphs">BOL</text>
<text x="270" y="443.5" fill="#ffff00" font-size="6.83" font-family="Liberation Mono" textLength="10" lengthAdjust="spacingAndGlyphs">20</text>
<text x="209" y="501" fill="#ffff00" font-size="6.07" font-family="Liberation Mono" textLength="9" lengthAdjust="spacingAndGlyphs">Q2</text>
<text x="177" y="508.5" fill="#ffff00" font-size="4.55" font-family="Liberation Mono" textLength="19" lengthAdjust="spacingAndGlyphs">BC547</text>
<text x="210" y="509" fill="#ffff00" font-size="5.31" font-family="Liberation Mono" textLength="13" lengthAdjust="spacingAndGlyphs">BOS</text>
<text x="215" y="519.5" fill="#ffff00" font-size="6.83" font-family="Liberation Mono" textLength="10" lengthAdjust="spacingAndGlyphs">20</text>
</svg></div>
<div id="vscroll" class="a">
  <div class="sbb" style="left:1px;top:1px"><svg class="a" style="left:0;top:0" width="13" height="13"><path d="M3 8 L6.5 4.5 L10 8" stroke="#4d6185" stroke-width="2" fill="none"/></svg></div>
  <div class="sbb" style="left:1px;top:139px;height:240px;background:linear-gradient(to right,#c6d3f7,#cad7fd 50%,#b9cbf3)"><svg class="a" style="left:3px;top:113px" width="8" height="10"><path d="M0 1.5h8M0 3.5h8M0 5.5h8M0 7.5h8" stroke="#eef3fe" stroke-width="1"/><path d="M1 2.5h8M1 4.5h8M1 6.5h8M1 8.5h8" stroke="#8ca4de" stroke-width="1"/></svg></div>
  <div class="sbb" style="left:1px;top:549px"><svg class="a" style="left:0;top:0" width="13" height="13"><path d="M3 5 L6.5 8.5 L10 5" stroke="#4d6185" stroke-width="2" fill="none"/></svg></div>
</div>
<div id="hscroll" class="a">
  <div class="sbb" style="left:1px;top:1px"><svg class="a" style="left:0;top:0" width="13" height="13"><path d="M8 3 L4.5 6.5 L8 10" stroke="#4d6185" stroke-width="2" fill="none"/></svg></div>
  <div class="sbb" style="left:258px;top:1px;width:478px;background:linear-gradient(to bottom,#c6d3f7,#cad7fd 50%,#b9cbf3)"><svg class="a" style="left:233px;top:3px" width="10" height="8"><path d="M1.5 0v8M3.5 0v8M5.5 0v8M7.5 0v8" stroke="#eef3fe"/><path d="M2.5 1v8M4.5 1v8M6.5 1v8M8.5 1v8" stroke="#8ca4de"/></svg></div>
  <div class="sbb" style="left:982px;top:1px"><svg class="a" style="left:0;top:0" width="13" height="13"><path d="M5 3 L8.5 6.5 L5 10" stroke="#4d6185" stroke-width="2" fill="none"/></svg></div>
</div>
<div class="a" style="left:1003px;top:691px;width:17px;height:17px;background:#ece9d8"><svg class="a" style="left:0;top:0" width="17" height="17"><path d="M13 5h2v2h-2zM10 8h2v2h-2zM13 8h2v2h-2zM7 11h2v2H7zM10 11h2v2h-2zM13 11h2v2h-2z" fill="#c0bfb0"/></svg></div>
<div id="status" class="a">
  <span style="left:6px">[-300,5325]</span><span style="left:90px;letter-spacing:0.95px">RAM: 2883K Used, 606420K Available</span>
</div>
<div id="task" class="a">
  <div class="a" style="left:0;top:4px;width:97px;height:30px;border-radius:0 12px 12px 0;background:linear-gradient(to bottom,#3c9a3c 0px,#5bbd5b 2px,#45a845 5px,#3c9d3c 20px,#2f8a2f 27px,#2a7a2a 30px);box-shadow:inset -2px 0 3px #1d5e1d"></div>
<svg class="a" style="left:10px;top:8px" width="22" height="22" viewBox="0 0 22 22"><path d="M3,4 q4,-2 8,0 l-1,7 q-4,-2 -8,0 z" fill="#f06020"/><path d="M12,4 q4,2 8,0 l-1,7 q-4,2 -8,0 z" fill="#60c030"/><path d="M2,12 q4,-2 8,0 l-1,7 q-4,-2 -8,0 z" fill="#3070f0"/><path d="M11,12 q4,2 8,0 l-1,7 q-4,2 -8,0 z" fill="#f0c020"/></svg>
<div class="a" style="left:35px;top:8px;color:#fff;font-size:18px;font-weight:bold;font-style:italic;text-shadow:1px 1px 1px #1a4a1a;letter-spacing:-0.3px">start</div>
<div class="a" style="left:108px;top:10px;width:2px;height:2px;background:#1a3f9a"></div>
<div class="a" style="left:108px;top:14px;width:2px;height:2px;background:#1a3f9a"></div>
<div class="a" style="left:108px;top:18px;width:2px;height:2px;background:#1a3f9a"></div>
<div class="a" style="left:108px;top:22px;width:2px;height:2px;background:#1a3f9a"></div>
<div class="a" style="left:108px;top:26px;width:2px;height:2px;background:#1a3f9a"></div>
<div class="a" style="left:117px;top:8px;width:159px;height:23px;border-radius:3px;background:linear-gradient(to bottom,#4a8bf5,#3c81f3 40%,#3575ec);box-shadow:inset 1px 1px 0 #6ea4f7"></div>
<div class="a" style="left:277px;top:8px;width:159px;height:23px;border-radius:3px;background:#1e4fb8;box-shadow:inset 1px 1px 1px #0f2f80"></div>
<svg class="a" style="left:127px;top:13px" width="15" height="15" viewBox="0 0 15 15"><rect x="0.5" y="0.5" width="14" height="14" fill="#d82020" stroke="#302020"/><circle cx="4" cy="4" r="2" fill="#ff7070"/><circle cx="10" cy="4" r="2" fill="#ff7070"/><circle cx="4" cy="10" r="2" fill="#ff7070"/><path d="M8 7 L13 13 L8 13 Z" fill="#000"/></svg>
<svg class="a" style="left:288px;top:13px" width="15" height="15" viewBox="0 0 15 15"><rect x="0.5" y="0.5" width="14" height="14" fill="#d82020" stroke="#302020"/><circle cx="4" cy="4" r="2" fill="#ff7070"/><circle cx="10" cy="4" r="2" fill="#ff7070"/><circle cx="4" cy="10" r="2" fill="#ff7070"/><path d="M8 7 L13 13 L8 13 Z" fill="#000"/></svg>
<div class="a" style="left:146px;top:12px;color:#fff;font-size:11px;letter-spacing:-0.1px;white-space:nowrap">Orcad Layout</div>
<div class="a" style="left:307px;top:12px;color:#fff;font-size:11px;letter-spacing:-0.1px;white-space:nowrap">Layout Plus -- E:\TOA...</div>
<div class="a" style="left:896px;top:4px;width:128px;height:30px;background:linear-gradient(to bottom,#0c59b9 0px,#19b9f3 1px,#14a5ee 3px,#1297e8 8px,#1191e4 24px,#0f7fd6 30px);border-left:1px solid #1042af"></div>
<svg class="a" style="left:905px;top:11px" width="56" height="17" viewBox="0 0 56 17"><rect x="4" y="1" width="8" height="7" fill="#1a2a6a" stroke="#8090c0" stroke-width="0.8"/><rect x="1" y="5" width="8" height="7" fill="#1a2a6a" stroke="#8090c0" stroke-width="0.8"/><ellipse cx="4" cy="14" rx="3" ry="1.5" fill="#d0d8f0"/><path d="M8,10 l7,6 M15,10 l-7,6" stroke="#e02020" stroke-width="2"/><rect x="22" y="1" width="8" height="7" fill="#1a2a6a" stroke="#8090c0" stroke-width="0.8"/><rect x="19" y="5" width="8" height="7" fill="#1a2a6a" stroke="#8090c0" stroke-width="0.8"/><ellipse cx="22" cy="14" rx="3" ry="1.5" fill="#d0d8f0"/><path d="M26,10 l7,6 M33,10 l-7,6" stroke="#e02020" stroke-width="2"/><circle cx="40" cy="5" r="2.5" fill="#e8f0f0"/><path d="M37,8 h5 l-1,7 h-3 z" fill="#e8f0f0"/><circle cx="46" cy="3" r="2.5" fill="#208040"/><path d="M43,6 h6 l-1,6 h-4 z" fill="#30a040"/><circle cx="48" cy="12" r="4" fill="#e02020" stroke="#fff" stroke-width="0.8"/><path d="M46.5,10.5 l3,3 M49.5,10.5 l-3,3" stroke="#fff"/></svg>
<div class="a" style="left:968px;top:12px;color:#fff;font-size:11px;letter-spacing:-0.4px;white-space:nowrap">5:09 PM</div>
</div>
</body></html>
